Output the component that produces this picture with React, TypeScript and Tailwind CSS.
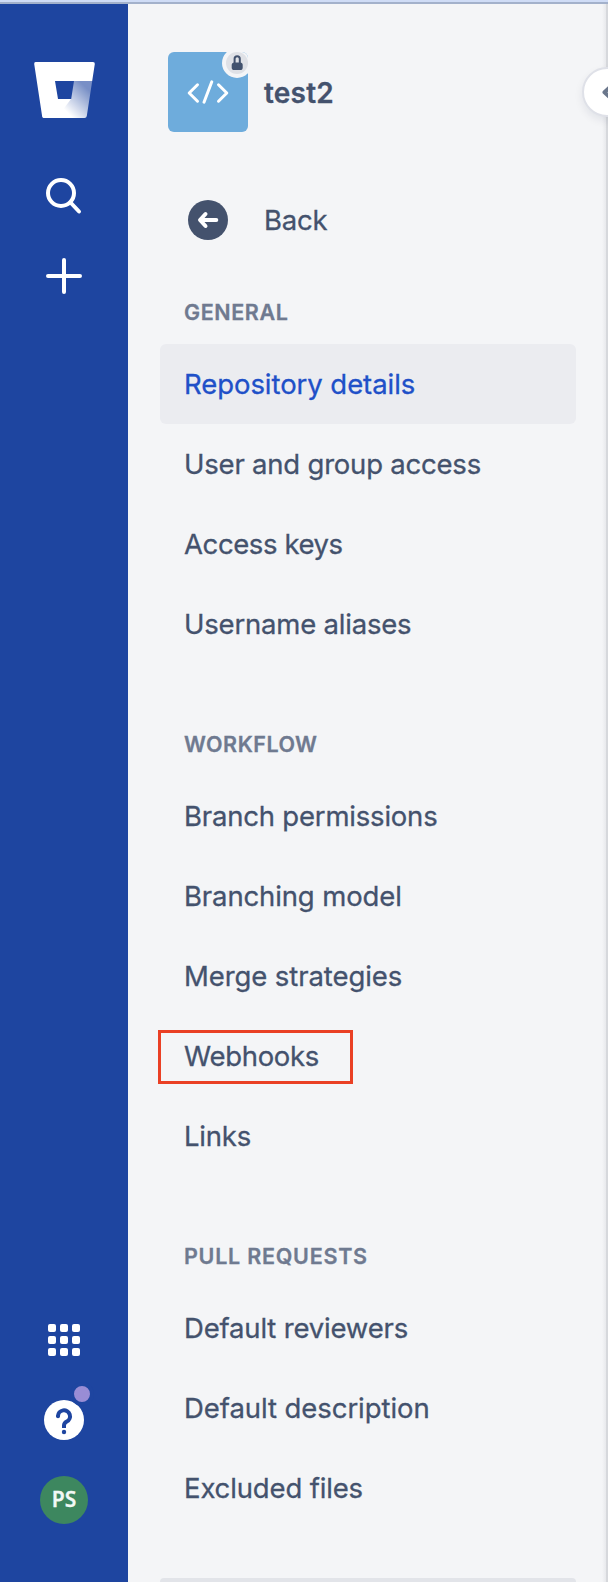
import React from "react";

type Item = { label: string; tracking: string; active?: boolean; marked?: boolean };
type Section = { title: string; tracking: string; items: Item[] };

const sections: Section[] = [
  {
    title: "GENERAL",
    tracking: "tracking-[0.6px]",
    items: [
      { label: "Repository details", tracking: "tracking-[-0.06px]", active: true },
      { label: "User and group access", tracking: "tracking-[-0.21px]" },
      { label: "Access keys", tracking: "tracking-[-0.4px]" },
      { label: "Username aliases", tracking: "tracking-[-0.2px]" },
    ],
  },
  {
    title: "WORKFLOW",
    tracking: "tracking-[0.5px]",
    items: [
      { label: "Branch permissions", tracking: "tracking-[-0.2px]" },
      { label: "Branching model", tracking: "tracking-[-0.13px]" },
      { label: "Merge strategies", tracking: "tracking-[-0.09px]" },
      { label: "Webhooks", tracking: "tracking-[-0.3px]", marked: true },
      { label: "Links", tracking: "tracking-[-0.2px]" },
    ],
  },
  {
    title: "PULL REQUESTS",
    tracking: "tracking-[0.75px]",
    items: [
      { label: "Default reviewers", tracking: "tracking-[-0.18px]" },
      { label: "Default description", tracking: "tracking-[-0.07px]" },
      { label: "Excluded files", tracking: "tracking-[-0.15px]" },
    ],
  },
];

function GlobalRail() {
  return (
    <aside className="flex w-32 shrink-0 flex-col items-center bg-[#1e45a0]">
      <svg className="mt-[58px] block h-[56px] w-[62px]" viewBox="0 0 62 56">
        <defs>
          <linearGradient id="fold" x1="58" y1="16" x2="29" y2="45" gradientUnits="userSpaceOnUse">
            <stop offset="0.25" stopColor="#fff" stopOpacity="0.4" />
            <stop offset="1" stopColor="#fff" />
          </linearGradient>
        </defs>
        <path
          fill="#fff"
          d="M2.6 0H60Q62 0 61.8 2L59.2 19H22L25 37H38L26 53Q24 56 20 56H11.3Q9.5 56 9.1 54L1.2 2Q1 0 2.6 0Z"
        />
        <path fill="url(#fold)" d="M41 19H59.2L53.8 54Q53.5 56 51.5 56H11Q9.3 56 9.3 54L25 37H38.2Z" />
      </svg>
      <svg className="mt-[52px] block size-12" viewBox="0 0 48 48" fill="none" stroke="#fff" strokeWidth="4" strokeLinecap="round">
        <circle cx="21" cy="23" r="13" />
        <path d="M30.5 32.5L39 41.5" />
      </svg>
      <svg className="mt-[34px] block size-12" viewBox="0 0 48 48" stroke="#fff" strokeWidth="4" strokeLinecap="round">
        <path d="M24 8V40M8 24H40" />
      </svg>
      <div className="mt-auto grid grid-cols-3 gap-1">
        {Array.from({ length: 9 }, (_, i) => (
          <span key={i} className="size-2 rounded-[2px] bg-white" />
        ))}
      </div>
      <div className="relative mt-11 flex size-10 rounded-full bg-white">
        <svg className="block size-10" viewBox="0 0 40 40" fill="none" stroke="#1e45a0" strokeWidth="4">
          <path d="M14 16.3a6 6 0 1 1 8.8 5.3Q20 23 20 25.5V28" />
          <circle cx="14" cy="16.3" r="2" fill="#1e45a0" stroke="none" />
          <circle cx="20" cy="32" r="2.2" fill="#1e45a0" stroke="none" />
        </svg>
        <span className="absolute -top-[18px] left-[26px] size-6 rounded-full border-4 border-[#1e45a0] bg-[#998dd5]" />
      </div>
      <div className="mt-9 mb-[58px] flex size-12 items-center justify-center rounded-full bg-[#3d875f] pb-px font-['Noto_Sans',sans-serif] text-[21px] font-semibold leading-none text-[#f2f8f5] [-webkit-text-stroke:0.3px]">
        PS
      </div>
    </aside>
  );
}

function RepoHeader() {
  return (
    <header className="ml-10 mt-12 flex h-20 items-center">
      <div className="relative flex size-20 overflow-hidden rounded-md bg-[#6eacdc]">
        <svg className="block size-20" viewBox="0 0 80 80" fill="none" stroke="#fff" strokeWidth="3" strokeLinecap="round" strokeLinejoin="round">
          <path d="M29.5 32.8L21.2 41L29.5 49.2M50.5 32.8L58.8 41L50.5 49.2M43.8 29.8L36 50.2" />
        </svg>
        <span className="absolute -top-1 left-[54px] flex size-[30px] items-center justify-center rounded-full bg-[#f4f5f7]">
          <span className="flex size-[22px] items-center justify-center rounded-full bg-[#dfe1e6]">
            <svg className="block size-[22px]" viewBox="0 0 22 22">
              <path d="M8.6 12V6.8a2.6 2.6 0 0 1 5.2 0V12" fill="none" stroke="#42526e" strokeWidth="2" />
              <rect x="5.7" y="10.5" width="11" height="7.5" rx="2.6" fill="#42526e" />
            </svg>
          </span>
        </span>
      </div>
      <span className="ml-4 pt-px text-[28px] font-semibold tracking-[0.2px] [-webkit-text-stroke:0.3px]">test2</span>
    </header>
  );
}

function MenuItem({ item }: { item: Item }) {
  return (
    <li
      className={`relative flex h-20 items-center rounded-md pl-6 pt-0.5 text-[27.5px] [-webkit-text-stroke:0.3px] ${item.tracking} ${
        item.active ? "bg-[#ebecf0] text-[#2050c8]" : ""
      }`}
    >
      {item.label}
      {item.marked && <span className="absolute -left-0.5 top-[14px] h-[54px] w-[195px] border-3 border-[#ea4025]" />}
    </li>
  );
}

export default function App() {
  return (
    <div className="flex h-[1582px] w-[608px] flex-col overflow-hidden bg-[#f4f5f7] font-[Inter,sans-serif] text-[#44526d]">
      <div className="h-1 shrink-0 border-b-2 border-[#a3b1cb] bg-[#cfdcf6]" />
      <div className="flex min-h-0 flex-1">
        <GlobalRail />
        <nav className="relative min-w-0 flex-1">
          <RepoHeader />
          <div className="ml-15 mt-16 flex h-12 items-center">
            <svg className="block size-10" viewBox="0 0 40 40">
              <circle cx="20" cy="20" r="20" fill="#44526d" />
              <path d="M28.3 20H13M17.5 14L12 20L17.5 26" fill="none" stroke="#fff" strokeWidth="4" strokeLinecap="round" strokeLinejoin="round" />
            </svg>
            <span className="ml-9 pt-0.5 text-[27.5px] tracking-[-0.2px] [-webkit-text-stroke:0.3px]">Back</span>
          </div>
          <div className="mx-8 mt-9">
            {sections.map((s, i) => (
              <section key={s.title} className={i ? "pt-12" : ""}>
                <h2 className={`flex h-16 items-center pl-6 text-[21.5px] font-semibold text-[#6f7a90] [-webkit-text-stroke:0.3px] ${s.tracking}`}>
                  {s.title}
                </h2>
                <ul>
                  {s.items.map((it) => (
                    <MenuItem key={it.label} item={it} />
                  ))}
                </ul>
              </section>
            ))}
            <div className="mt-[50px] h-4 rounded bg-[#e2e4e9]" />
          </div>
          <div className="absolute inset-y-0 right-0 flex w-1.5">
            <div className="w-1 bg-gradient-to-r from-[#f4f5f7] to-[#e8e9ec]" />
            <div className="w-0.5 bg-[#d6d8dc]" />
          </div>
          <div className="absolute left-[454px] top-[63px] flex size-[50px] items-center rounded-full border-2 border-[#dfe1e8] bg-white shadow-[0_4px_8px_rgba(9,30,66,0.08)]">
            <svg className="ml-[17px] block size-4 shrink-0" viewBox="0 0 16 16" fill="none" stroke="#6b778c" strokeWidth="4" strokeLinecap="round" strokeLinejoin="round">
              <path d="M8.5 3.5L3.5 8.3L8.5 13" />
            </svg>
          </div>
        </nav>
      </div>
    </div>
  );
}
